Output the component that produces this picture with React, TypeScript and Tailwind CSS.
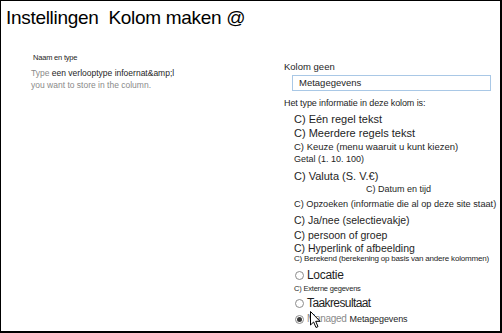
const typeRows: { label: string; size: string; mt: string; indent?: string }[] = [
  { label: "C) Eén regel tekst", size: "text-[11px]", mt: "mt-[4px]" },
  { label: "C) Meerdere regels tekst", size: "text-[11px]", mt: "mt-[2px]" },
  { label: "C) Keuze (menu waaruit u kunt kiezen)", size: "text-[9.5px]", mt: "mt-[2px]" },
  { label: "Getal (1. 10. 100)", size: "text-[9px]", mt: "mt-0" },
  { label: "C) Valuta (S. V.€)", size: "text-[11px]", mt: "mt-[5px]" },
  { label: "C) Datum en tijd", size: "text-[9px]", mt: "mt-[1px]", indent: "pl-[72px]" },
  { label: "C) Opzoeken (informatie die al op deze site staat)", size: "text-[9.2px]", mt: "mt-[3px]" },
  { label: "C) Ja/nee (selectievakje)", size: "text-[10.5px]", mt: "mt-[4px]" },
  { label: "C) persoon of groep", size: "text-[10.5px]", mt: "mt-[3px]" },
  { label: "C) Hyperlink of afbeelding", size: "text-[10.5px]", mt: "mt-[1px]" },
  { label: "C) Berekend (berekening op basis van andere kolommen)", size: "text-[8px] tracking-[-0.2px]", mt: "mt-[-1px]" },
];

function Radio({ checked = false }: { checked?: boolean }) {
  return (
    <span className="w-[9px] h-[9px] rounded-full border border-[#8c8c8c] bg-white flex items-center justify-center shrink-0">
      {checked && <span className="w-[5px] h-[5px] rounded-full bg-[#3a3a3a]" />}
    </span>
  );
}

export default function App() {
  return (
    <div
      className="relative w-[502px] h-[333px] overflow-hidden bg-white border border-r-2 border-b-2 border-black text-[#1e1e1e]"
      style={{ fontFamily: '"Liberation Sans", Arial, sans-serif' }}
    >
      <h1 className="pl-[5px] pt-[7px] text-[19px] leading-[20px] text-black whitespace-pre tracking-[-0.3px]">
        Instellingen  Kolom maken @
      </h1>

      <div className="flex mt-[8px]">
        <div className="w-[283px] shrink-0 pl-[30px] pt-[17px]">
          <div className="pl-[2px] text-[7.5px] leading-[10px] tracking-[-0.2px]">Naam en type</div>
          <div className="mt-[4px] text-[8.5px] leading-[12px] text-[#8a8a8a]">
            Type <span className="text-[#1e1e1e]">{"een verlooptype infoernat&amp;l"}</span>
          </div>
          <div className="text-[8.5px] leading-[12px] text-[#8a8a8a]">you want to store in the column.</div>
        </div>

        <div className="flex-1 min-w-0 pt-[25px]">
          <div className="text-[9.5px] leading-[12px]">Kolom geen</div>
          <div className="ml-[8px] mt-[2px] w-[199px] h-[16px] border border-[#a9c8e6] flex items-center pl-[6px] text-[9.5px]">
            Metagegevens
          </div>
          <div className="mt-[6px] text-[9px] leading-[12px] tracking-[-0.1px]">
            Het type informatie in deze kolom is:
          </div>

          <div className="pl-[10px] flex flex-col">
            {typeRows.map((row) => (
              <div
                key={row.label}
                className={`${row.size} ${row.mt} ${row.indent ?? ""} leading-[12px] whitespace-nowrap`}
              >
                {row.label}
              </div>
            ))}
            <div className="mt-[4px] flex items-center gap-[3px] h-[12px] pl-[1px]">
              <Radio />
              <span className="text-[12px] leading-[12px] tracking-[-0.3px]">Locatie</span>
            </div>
            <div className="mt-[2px] text-[7.5px] leading-[12px] tracking-[-0.2px]">C) Externe gegevens</div>
            <div className="mt-[2px] flex items-center gap-[3px] h-[12px] pl-[1px]">
              <Radio />
              <span className="text-[12px] leading-[12px] tracking-[-0.6px]">Taakresultaat</span>
            </div>
            <div className="mt-[4px] flex items-center gap-[3px] h-[12px] pl-[1px]">
              <Radio checked />
              <span className="text-[10px] leading-[12px] text-[#8a8a8a] tracking-[-0.3px]">Managed</span>
              <span className="text-[9px] leading-[12px] tracking-[-0.1px]">Metagegevens</span>
            </div>
          </div>
        </div>
      </div>

      <svg
        className="absolute left-[309px] top-[310px]"
        width="12"
        height="18"
        viewBox="0 0 12 18"
      >
        <path
          d="M0.5 0.5 L0.5 14 L3.6 11 L6 16.5 L8 15.6 L5.7 10.3 L10 10.3 Z"
          fill="white"
          stroke="black"
          strokeWidth="1"
          strokeLinejoin="round"
        />
      </svg>
    </div>
  );
}
